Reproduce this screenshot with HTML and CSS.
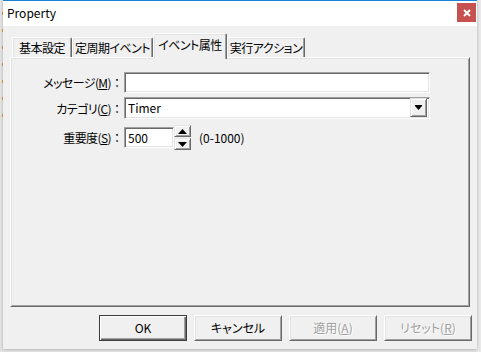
FILE: index.html
```html
<!DOCTYPE html>
<html lang="ja">
<head>
    <meta charset="UTF-8">
    <title>Property</title>
    <link rel="stylesheet" href="styles.css">
</head>
<body>
    <div class="screen">
        <div class="strip"></div>
        <div class="window">
            <div class="titlebar">
                <span class="title">Property</span>
                <span class="close">
                    <svg width="8" height="8" viewBox="0 0 8 8"><path d="M1 1L7 7M7 1L1 7" stroke="#fff" stroke-width="2"/></svg>
                </span>
            </div>
            <div class="main">
                <ul class="tabs">
                    <li class="tab t1">基本設定</li>
                    <li class="tab t2">定周期イベント</li>
                    <li class="tab t3 on">イベント属性</li>
                    <li class="tab t4">実行アクション</li>
                </ul>
                <div class="panel">
                    <div class="row r1">
                        <label class="label">メッセージ(<u>M</u>)<span class="colon">：</span></label>
                        <div class="edit wide"></div>
                    </div>
                    <div class="row r2">
                        <label class="label">カテゴリ(<u>C</u>)<span class="colon">：</span></label>
                        <div class="edit combo">
                            <span class="val">Timer</span>
                            <span class="drop">
                                <svg width="7" height="5" viewBox="0 0 7 5"><path d="M0 0H7V1L3.5 5L0 1Z" fill="#000"/></svg>
                            </span>
                        </div>
                    </div>
                    <div class="row r3">
                        <label class="label">重要度(<u>S</u>)<span class="colon">：</span></label>
                        <div class="edit num"><span class="val">500</span></div>
                        <div class="spin">
                            <span class="sbtn"><svg width="9" height="5" viewBox="0 0 9 5"><path d="M4.5 0L9 5H0Z" fill="#000"/></svg></span>
                            <span class="sbtn"><svg width="9" height="5" viewBox="0 0 9 5"><path d="M0 0H9L4.5 5Z" fill="#000"/></svg></span>
                        </div>
                        <span class="range">(0-1000)</span>
                    </div>
                </div>
                <div class="buttons">
                    <div class="btn def">OK</div>
                    <div class="btn">キャンセル</div>
                    <div class="btn off">適用(<u>A</u>)</div>
                    <div class="btn off">リセット(<u>R</u>)</div>
                </div>
            </div>
        </div>
    </div>
</body>
</html>
```

FILE: styles.css
```css
* {
    margin: 0;
    padding: 0;
    box-sizing: border-box;
}

li {
    list-style: none;
}

body {
    font-family: "Noto Sans CJK JP", sans-serif;
    font-size: 12px;
    font-feature-settings: "palt";
    color: #000;
    background: #e9e9e9;
}

.screen {
    display: flex;
    width: 481px;
    height: 352px;
    overflow: hidden;
}

/* window behind the dialog */
.strip {
    width: 3px;
    flex: none;
    background: repeating-linear-gradient(transparent 0 12px, #e59a3f 12px 15px, transparent 15px 17px) right top / 1px 119px no-repeat, #e4e4e4;
}

.window {
    width: 474px;
    height: 349px;
    flex: none;
    border-top: 1px solid #1883d7;
    background: #f0f0f0;
    box-shadow: 0 1px 3px rgba(0, 0, 0, .25);
}

.titlebar {
    display: flex;
    align-items: flex-start;
    justify-content: space-between;
    height: 25px;
    background: #fff;
    padding-left: 4px;
}

.title {
    line-height: 24px;
}

.close {
    display: flex;
    align-items: center;
    justify-content: center;
    width: 19px;
    height: 19px;
    margin: 2px 1px 0 0;
    background: #c75050;
}

.main {
    padding: 7px 7px 0 7px;
}

.tabs {
    display: flex;
    align-items: flex-end;
    height: 24px;
    padding-left: 2px;
}

.tab {
    height: 20px;
    line-height: 19px;
    text-align: center;
    white-space: nowrap;
    letter-spacing: -0.5px;
    background: #f0f0f0;
    border-top: 1px solid #fff;
    border-left: 1px solid #fff;
    border-right: 1px solid #696969;
    border-radius: 2px 2px 0 0;
    box-shadow: inset -1px 0 #a0a0a0, inset 1px 1px #e3e3e3;
}

.t1 { width: 60px; }
.t2 { width: 81px; }
.t3 { width: 74px; }
.t4 { width: 78px; }

.tab.on {
    position: relative;
    z-index: 2;
    height: 26px;
    line-height: 21px;
    margin-bottom: -2px;
}

.panel {
    height: 250px;
    border: 1px solid;
    border-color: #fff #696969 #696969 #fff;
    box-shadow: inset 1px 1px #e3e3e3, inset -1px -1px #a0a0a0;
    padding-top: 14px;
}

.row {
    display: flex;
    align-items: center;
}

.r2 {
    margin-top: 4px;
}

.r3 {
    margin-top: 6px;
}

.label {
    width: 113px;
    text-align: right;
    letter-spacing: -0.6px;
    padding-right: 1px;
}

.colon {
    font-feature-settings: normal;
    letter-spacing: 0;
}

.edit {
    display: flex;
    align-items: center;
    background: #fff;
    border: 1px solid;
    border-color: #a0a0a0 #fff #fff #a0a0a0;
    box-shadow: inset 1px 1px #696969, inset -1px -1px #e3e3e3;
    padding-left: 3px;
}

.wide {
    width: 306px;
    height: 21px;
}

.combo {
    width: 306px;
    height: 22px;
    justify-content: space-between;
    padding: 1px 2px 2px 3px;
}

.val {
    line-height: 18px;
}

.drop,
.sbtn {
    display: flex;
    align-items: center;
    justify-content: center;
    background: #f0f0f0;
    border: 1px solid;
    border-color: #e3e3e3 #696969 #696969 #e3e3e3;
    box-shadow: inset 1px 1px #fff, inset -1px -1px #a0a0a0;
}

.drop {
    width: 17px;
    height: 19px;
}

.num {
    width: 50px;
    height: 21px;
}

.spin {
    display: flex;
    flex-direction: column;
    gap: 1px;
}

.sbtn {
    width: 17px;
    height: 12px;
}

.range {
    margin-left: 8px;
}

.buttons {
    display: flex;
    justify-content: flex-end;
    gap: 7px;
    margin-right: -2px;
    padding-top: 8px;
}

.btn {
    width: 88px;
    height: 26px;
    line-height: 23px;
    text-align: center;
    background: #f0f0f0;
    border: 1px solid;
    border-color: #fff #696969 #696969 #fff;
    box-shadow: inset 1px 1px #e3e3e3, inset -1px -1px #a0a0a0;
}

.btn.def {
    border-color: #3c3c3c;
    box-shadow: inset 1px 1px #fff, inset -1px -1px #696969, inset -2px -2px #a0a0a0;
}

.btn.off {
    color: #a0a0a0;
    text-shadow: 1px 1px #fff;
}
```
